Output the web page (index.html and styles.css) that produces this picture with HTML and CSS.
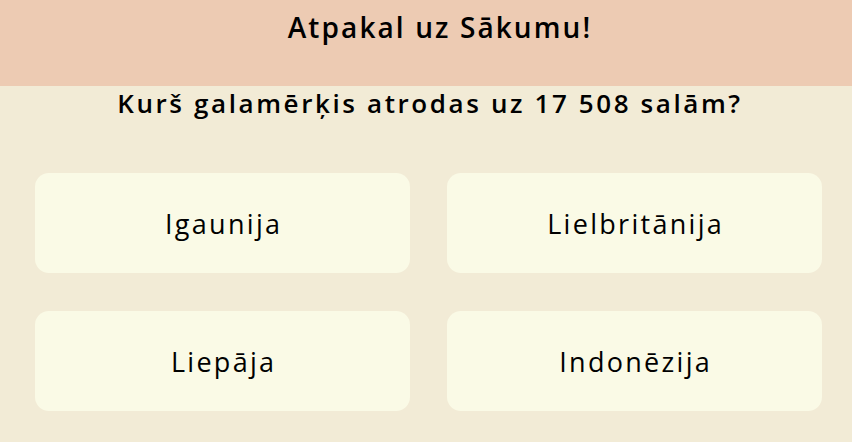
FILE: index.html
```html
<!DOCTYPE html>
<html lang="lv">
<head>
<meta charset="utf-8">
<link rel="stylesheet" href="styles.css">
</head>
<body>
<header class="top">
  <a class="back" href="#">Atpakal uz Sākumu!</a>
</header>
<main class="quiz">
  <h1 class="question">Kurš galamērķis atrodas uz 17 508 salām?</h1>
  <div class="answers">
    <button class="answer">Igaunija</button>
    <button class="answer">Lielbritānija</button>
    <button class="answer">Liepāja</button>
    <button class="answer">Indonēzija</button>
  </div>
</main>
</body>
</html>
```

FILE: styles.css
```css
html, body {
  margin: 0;
  padding: 0;
}
body {
  background: #f2ebd6;
  font-family: "Open Sans", sans-serif;
  color: #000;
  height: 442px;
  overflow: hidden;
}
.top {
  background: #edcbb3;
  height: 86px;
  display: flex;
  justify-content: center;
  padding: 7px 0 0 28px;
  box-sizing: border-box;
}
.back {
  color: #000;
  text-decoration: none;
  font-size: 28px;
  font-weight: 600;
  letter-spacing: 2.1px;
  line-height: 40px;
}
.quiz {
  padding: 0 30px 0 35px;
}
.question {
  margin: 0;
  text-align: center;
  font-size: 26px;
  font-weight: 600;
  letter-spacing: 2.6px;
  line-height: 34px;
  padding-left: 3px;
}
.answers {
  margin-top: 53px;
  display: grid;
  grid-template-columns: 375px 375px;
  column-gap: 37px;
  row-gap: 38px;
}
.answer {
  height: 100px;
  border: none;
  border-radius: 14px;
  background: #fafae6;
  font-family: inherit;
  font-size: 27px;
  color: #000;
  letter-spacing: 2.3px;
  padding: 0 0 0 2.3px;
}
```
